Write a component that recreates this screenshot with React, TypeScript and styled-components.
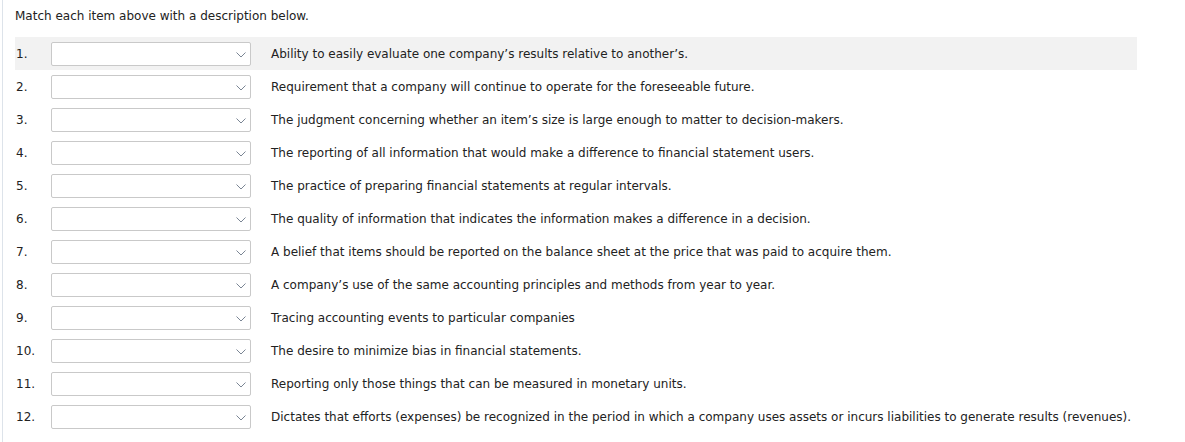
import React from "react";
import styled, { createGlobalStyle } from "styled-components";

const GlobalStyle = createGlobalStyle`
  body {
    margin: 0;
    background: #ffffff;
    font-family: "DejaVu Sans", Verdana, sans-serif;
    color: #222222;
  }
`;

const Page = styled.div`
  box-sizing: border-box;
  width: 1185px;
  height: 442px;
  margin-left: 2px;
  border-left: 1px solid #dde3ea;
  padding: 9px 0 0 12px;
`;

const Prompt = styled.div`
  font-size: 12px;
  line-height: 15px;
  height: 28px;
`;

const List = styled.div`
  display: flex;
  flex-direction: column;
  width: 1122px;
`;

const Row = styled.div<{ highlighted?: boolean }>`
  display: grid;
  grid-template-columns: 36px 200px 1fr;
  align-items: center;
  height: 33px;
  background: ${({ highlighted }) => (highlighted ? "#f2f2f2" : "transparent")};
  font-size: 12px;
`;

const Number = styled.span`
  padding-left: 1px;
`;

const SelectBox = styled.div`
  box-sizing: border-box;
  position: relative;
  height: 24px;
  border: 1px solid #c9c9c9;
  border-radius: 2px;
  background: #ffffff;
`;

const Chevron = styled.svg`
  position: absolute;
  right: 4px;
  top: 9px;
`;

const Description = styled.span`
  padding-left: 20px;
  white-space: nowrap;
`;

const items = [
  "Ability to easily evaluate one company\u2019s results relative to another\u2019s.",
  "Requirement that a company will continue to operate for the foreseeable future.",
  "The judgment concerning whether an item\u2019s size is large enough to matter to decision-makers.",
  "The reporting of all information that would make a difference to financial statement users.",
  "The practice of preparing financial statements at regular intervals.",
  "The quality of information that indicates the information makes a difference in a decision.",
  "A belief that items should be reported on the balance sheet at the price that was paid to acquire them.",
  "A company\u2019s use of the same accounting principles and methods from year to year.",
  "Tracing accounting events to particular companies",
  "The desire to minimize bias in financial statements.",
  "Reporting only those things that can be measured in monetary units.",
  "Dictates that efforts (expenses) be recognized in the period in which a company uses assets or incurs liabilities to generate results (revenues).",
];

const App = () => (
  <>
    <GlobalStyle />
    <Page>
      <Prompt>Match each item above with a description below.</Prompt>
      <List>
        {items.map((text, i) => (
          <Row key={i} highlighted={i === 0}>
            <Number>{i + 1}.</Number>
            <SelectBox>
              <Chevron width="10" height="6" viewBox="0 0 10 6">
                <path d="M0.5 0.5 L5 5 L9.5 0.5" fill="none" stroke="#7a8594" strokeWidth="1" />
              </Chevron>
            </SelectBox>
            <Description>{text}</Description>
          </Row>
        ))}
      </List>
    </Page>
  </>
);

export default App;
